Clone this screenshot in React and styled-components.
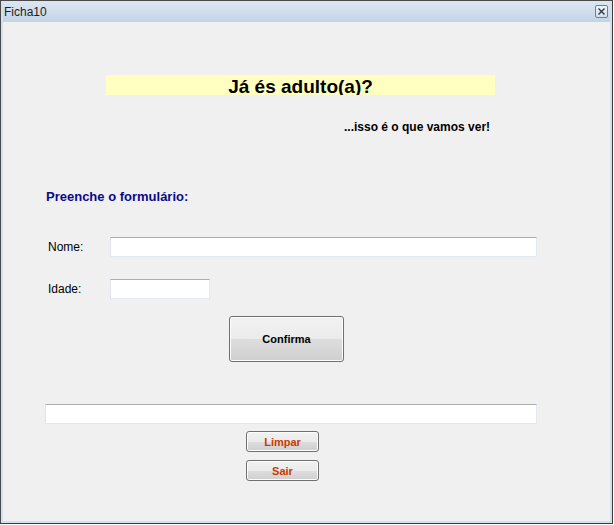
import styled, { createGlobalStyle } from "styled-components";

const Global = createGlobalStyle`
  html, body {
    margin: 0;
    padding: 0;
    background: #ffffff;
  }
  * {
    box-sizing: border-box;
  }
`;

const Window = styled.div`
  width: 613px;
  height: 524px;
  display: flex;
  flex-direction: column;
  border: 1px solid #4a4a4a;
  border-right-color: #3a3a3a;
  border-bottom-color: #3a3a3a;
  background: #d3e0ee;
  padding: 0 2px 2px 2px;
  font-family: "Liberation Sans", Arial, sans-serif;
`;

const TitleBar = styled.div`
  height: 21px;
  display: flex;
  align-items: center;
  justify-content: space-between;
  padding: 0 2px 0 1px;
  background: linear-gradient(#dde7f2, #c3d4e7);
  color: #1e1e1e;
  font-size: 12px;
`;

const CloseBox = styled.div`
  width: 13px;
  height: 13px;
  border: 1px solid #6f7f93;
  border-radius: 2px;
  background: linear-gradient(#eef3f9, #d3dde9);
  display: flex;
  align-items: center;
  justify-content: center;
`;

const Client = styled.div`
  flex: 1;
  background: #f0f0f0;
  display: flex;
  flex-direction: column;
  align-items: flex-start;
  font-size: 11px;
  color: #000;
`;

const Banner = styled.div`
  margin: 53px 0 0 103px;
  width: 389px;
  height: 20px;
  overflow: hidden;
  background: #ffffc0;
  text-align: center;
  font-weight: bold;
  font-size: 19px;
  line-height: 24px;
`;

const Sub = styled.div`
  margin: 25px 0 0 341px;
  font-weight: bold;
  font-size: 12px;
`;

const Heading = styled.div`
  margin: 55px 0 0 43px;
  font-weight: bold;
  font-size: 13px;
  color: #0a0a8a;
`;

const Row = styled.div`
  display: flex;
  align-items: center;
  margin: ${({ $top }) => $top}px 0 0 45px;
`;

const Label = styled.span`
  width: 62px;
  font-size: 12px;
`;

const Input = styled.div`
  width: ${({ $w }) => $w}px;
  height: 20px;
  background: #fff;
  border: 1px solid #e3e9ef;
  border-top-color: #abadb3;
  border-left-color: #e2e3ea;
  margin-left: ${({ $left }) => $left || 0}px;
  margin-top: ${({ $top }) => $top || 0}px;
`;

const Button = styled.div`
  width: ${({ $w }) => $w}px;
  height: ${({ $h }) => $h}px;
  margin: ${({ $top }) => $top}px 0 0 ${({ $left }) => $left}px;
  border: 1px solid #707070;
  border-radius: 3px;
  background: linear-gradient(#f2f2f2 0%, #ebebeb 50%, #dddddd 51%, #cfcfcf 100%);
  display: flex;
  align-items: center;
  justify-content: center;
  font-weight: bold;
  font-size: 11px;
  color: ${({ $color }) => $color || "#000"};
  box-shadow: inset 0 0 0 1px #fcfcfc;
`;

export default function App() {
  return (
    <>
      <Global />
      <Window>
        <TitleBar>
          <span>Ficha10</span>
          <CloseBox>
            <svg width="7" height="7" viewBox="0 0 7 7">
              <path d="M0.5 0.5 L6.5 6.5 M6.5 0.5 L0.5 6.5" stroke="#2b3a4d" strokeWidth="1.4" />
            </svg>
          </CloseBox>
        </TitleBar>
        <Client>
          <Banner>Já és adulto(a)?</Banner>
          <Sub>...isso é o que vamos ver!</Sub>
          <Heading>Preenche o formulário:</Heading>
          <Row $top={33}>
            <Label>Nome:</Label>
            <Input $w={427} />
          </Row>
          <Row $top={22}>
            <Label>Idade:</Label>
            <Input $w={100} />
          </Row>
          <Button $w={115} $h={46} $top={17} $left={226}>
            Confirma
          </Button>
          <Input $w={492} $left={42} $top={42} />
          <Button $w={73} $h={21} $top={7} $left={243} $color="#c83c00">
            Limpar
          </Button>
          <Button $w={73} $h={21} $top={8} $left={243} $color="#c83c00">
            Sair
          </Button>
        </Client>
      </Window>
    </>
  );
}
